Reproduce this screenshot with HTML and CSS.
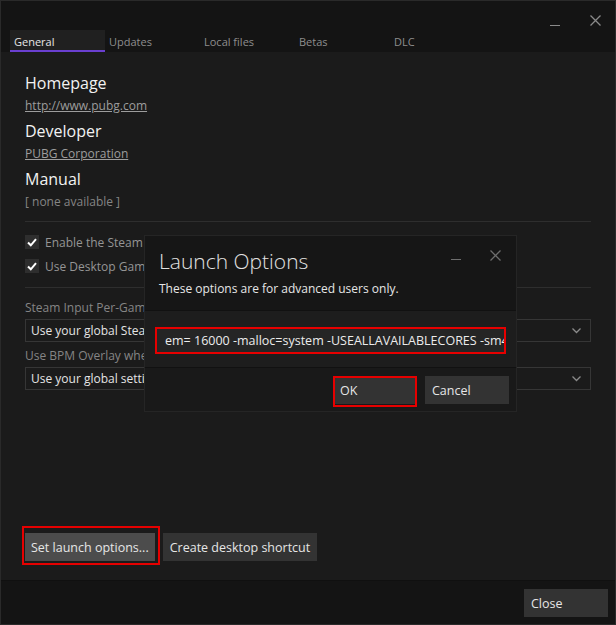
FILE: index.html
```html
<!DOCTYPE html>
<html lang="en">
<head>
    <meta charset="UTF-8">
    <title>Properties</title>
    <link rel="stylesheet" href="styles.css">
</head>
<body>
    <div class="window">
        <div class="header">
            <div class="titlebar">
                <svg class="win-btn" width="10" height="10" viewBox="0 0 10 10"><path d="M0 9.5H10" stroke="#8a8a8a" stroke-width="1"/></svg>
                <svg class="win-btn" width="11" height="11" viewBox="0 0 11 11"><path d="M0.5 0.5L10.5 10.5M10.5 0.5L0.5 10.5" stroke="#8a8a8a" stroke-width="1.3"/></svg>
            </div>
            <div class="tabs">
                <div class="tab active">General</div>
                <div class="tab">Updates</div>
                <div class="tab">Local files</div>
                <div class="tab">Betas</div>
                <div class="tab">DLC</div>
            </div>
        </div>

        <div class="content">
            <div class="info-title">Homepage</div>
            <a class="info-link" href="#">http://www.pubg.com</a>
            <div class="info-title">Developer</div>
            <a class="info-link" href="#">PUBG Corporation</a>
            <div class="info-title">Manual</div>
            <div class="info-none">[ none available ]</div>

            <div class="separator"></div>

            <div class="check-row">
                <span class="check-box"><svg width="10" height="9" viewBox="0 0 10 9"><path d="M1 4.5L3.8 7.3L9 1.2" fill="none" stroke="#fff" stroke-width="2"/></svg></span>
                <span>Enable the Steam Overlay while in-game</span>
            </div>
            <div class="check-row">
                <span class="check-box"><svg width="10" height="9" viewBox="0 0 10 9"><path d="M1 4.5L3.8 7.3L9 1.2" fill="none" stroke="#fff" stroke-width="2"/></svg></span>
                <span>Use Desktop Game Theatre while SteamVR is active</span>
            </div>

            <div class="separator sep-second"></div>

            <div class="field-label">Steam Input Per-Game Setting (requires restart of game)</div>
            <div class="select">
                <span>Use your global Steam Input settings (None)</span>
                <svg width="9" height="6" viewBox="0 0 9 6"><path d="M0.5 0.5L4.5 4.5L8.5 0.5" fill="none" stroke="#8a8a8a" stroke-width="1.3"/></svg>
            </div>
            <div class="field-label">Use BPM Overlay when Steam Input is enabled (requires restarting game)</div>
            <div class="select">
                <span>Use your global setting (Enabled)</span>
                <svg width="9" height="6" viewBox="0 0 9 6"><path d="M0.5 0.5L4.5 4.5L8.5 0.5" fill="none" stroke="#8a8a8a" stroke-width="1.3"/></svg>
            </div>

            <div class="actions">
                <button class="btn btn-light marked mark-launch">Set launch options...</button>
                <button class="btn">Create desktop shortcut</button>
            </div>
        </div>

        <div class="footer">
            <button class="btn btn-close">Close</button>
        </div>

        <div class="dialog">
            <div class="dialog-head">
                <div class="dialog-controls">
                    <svg width="10" height="10" viewBox="0 0 10 10"><path d="M0 9.5H10" stroke="#6e6e6e" stroke-width="1"/></svg>
                    <svg width="11" height="11" viewBox="0 0 11 11"><path d="M0.5 0.5L10.5 10.5M10.5 0.5L0.5 10.5" stroke="#6e6e6e" stroke-width="1.3"/></svg>
                </div>
                <div class="dialog-title">Launch Options</div>
                <div class="dialog-sub">These options are for advanced users only.</div>
            </div>
            <div class="dialog-body">
                <div class="launch-input">em= 16000 -malloc=system -USEALLAVAILABLECORES -sm4 -high</div>
            </div>
            <div class="dialog-foot">
                <button class="btn btn-dialog marked mark-ok">OK</button>
                <button class="btn btn-dialog">Cancel</button>
            </div>
        </div>
    </div>
</body>
</html>
```

FILE: styles.css
```css
body {
    margin: 0;
    background-color: #1b1b1b;
    font-family: "Open Sans", "Noto Sans", sans-serif;
}
.window {
    position: relative;
    width: 616px;
    height: 625px;
    box-sizing: border-box;
    border: 1px solid #2a2a2a;
    display: flex;
    flex-direction: column;
    background-color: #1b1b1b;
}

/* header + tabs */
.header {
    background-color: #141414;
}
.titlebar {
    height: 29px;
    display: flex;
    justify-content: flex-end;
    align-items: flex-start;
    gap: 30px;
    padding-right: 14px;
    box-sizing: border-box;
}
.win-btn:first-child {
    margin-top: 15px;
}
.win-btn:last-child {
    margin-top: 14px;
}
.tabs {
    display: flex;
    padding-left: 9px;
}
.tab {
    width: 95px;
    height: 22px;
    line-height: 21px;
    padding: 1px 0 0 4px;
    box-sizing: border-box;
    border-bottom: 2px solid transparent;
    font-size: 11px;
    color: #8e8e8e;
}
.tab.active {
    background-color: #202020;
    border-bottom-color: #6a3fd0;
    color: #e6e6e6;
}

/* main content */
.content {
    flex: 1;
    display: flex;
    flex-direction: column;
    align-items: flex-start;
    padding: 19px 24px 19px;
}
.info-title {
    font-size: 16px;
    line-height: 24px;
    color: #f2f2f2;
}
.info-title + .info-title,
.info-link + .info-title {
    margin-top: 3px;
}
.info-link,
.info-none {
    font-size: 12px;
    line-height: 21px;
    color: #9d9d9d;
}
.info-none {
    color: #858585;
}
.separator {
    align-self: stretch;
    height: 1px;
    margin-top: 9px;
    background-color: #2e2e2e;
}
.sep-second {
    margin-top: 9px;
}
.check-row {
    display: flex;
    align-items: center;
    gap: 6px;
    height: 24px;
    font-size: 12px;
    color: #959595;
}
.separator + .check-row {
    margin-top: 8px;
}
.check-box {
    width: 14px;
    height: 14px;
    background-color: #2e2e2e;
    display: flex;
    align-items: center;
    justify-content: center;
}
.field-label {
    font-size: 12px;
    line-height: 21px;
    color: #858585;
    margin-top: 3px;
}
.sep-second + .field-label {
    margin-top: 9px;
}
.select {
    align-self: stretch;
    height: 23px;
    box-sizing: border-box;
    border: 1px solid #363636;
    margin-top: 1px;
    padding: 0 9px 0 5px;
    display: flex;
    align-items: center;
    justify-content: space-between;
    font-size: 12px;
    color: #e4e4e4;
}

/* buttons */
.actions {
    margin-top: auto;
    display: flex;
    gap: 8px;
}
.btn {
    position: relative;
    height: 28px;
    border: none;
    padding: 0 7px;
    background-color: #333333;
    color: #e6e6e6;
    font-family: inherit;
    font-size: 12.5px;
    text-align: left;
}
.btn-light {
    background-color: #4c4c4c;
    padding: 0 6px;
}
.marked::after {
    content: "";
    position: absolute;
    border: 2px solid #e60000;
}
.mark-launch::after {
    top: -7px;
    left: -3px;
    right: -5px;
    bottom: -4px;
}
.mark-ok::after {
    top: 0;
    left: 0;
    right: 0;
    bottom: -3px;
}

.footer {
    height: 44px;
    border-top: 1px solid #101010;
    background-color: #141414;
    display: flex;
    justify-content: flex-end;
    align-items: flex-start;
    padding: 8px 7px 0 0;
    box-sizing: border-box;
}
.btn-close {
    width: 84px;
}

/* launch options dialog */
.dialog {
    position: absolute;
    left: 143px;
    top: 234px;
    width: 373px;
    box-sizing: border-box;
    border: 1px solid #252525;
    background-color: #161616;
}
.dialog-head {
    position: relative;
    height: 74px;
    padding: 10px 14px 0;
    box-sizing: border-box;
}
.dialog-controls {
    position: absolute;
    top: 14px;
    right: 15px;
    display: flex;
    align-items: flex-start;
    gap: 29px;
}
.dialog-title {
    font-size: 21px;
    font-weight: 300;
    line-height: 30px;
    color: #e2e2e2;
}
.dialog-sub {
    margin-top: 4px;
    font-size: 12px;
    line-height: 18px;
    color: #e6e6e6;
}
.dialog-body {
    border-top: 1px solid #111;
    background-color: #1d1d1d;
    padding: 16px 10px 13px;
}
.launch-input {
    height: 27px;
    box-sizing: border-box;
    border: 2px solid #e60000;
    background-color: #252525;
    padding-left: 8px;
    font-size: 12.5px;
    line-height: 23px;
    color: #ececec;
    white-space: nowrap;
    overflow: hidden;
}
.dialog-foot {
    border-top: 1px solid #111;
    background-color: #191919;
    display: flex;
    justify-content: flex-end;
    gap: 8px;
    padding: 8px 7px 7px;
}
.btn-dialog {
    width: 84px;
}
```
